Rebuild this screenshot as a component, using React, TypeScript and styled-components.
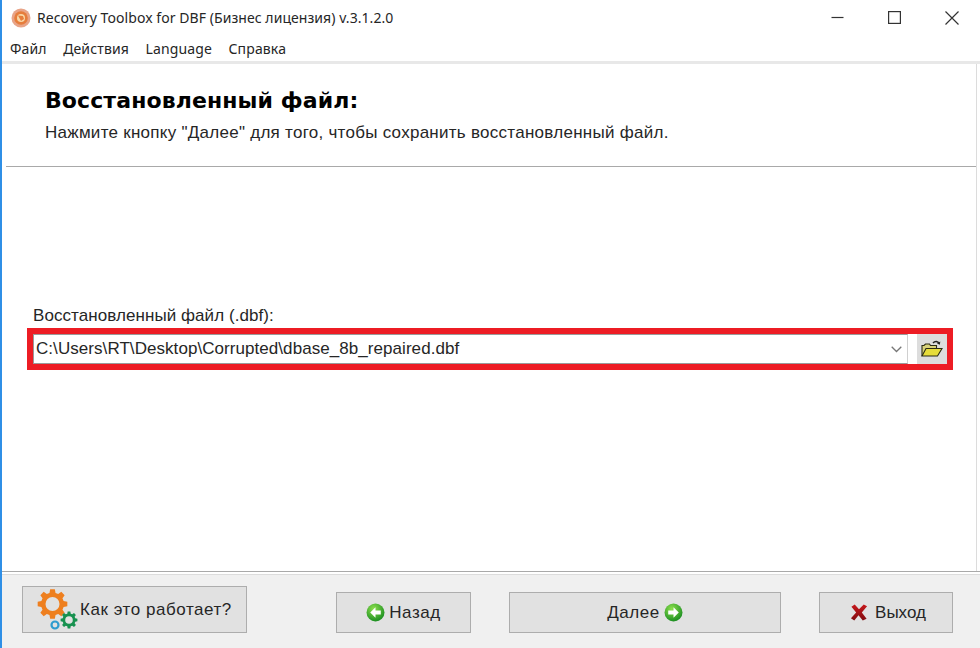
import React from 'react';
import styled, { createGlobalStyle } from 'styled-components';

const GlobalStyle = createGlobalStyle`
  html, body { margin: 0; padding: 0; background: #ffffff; }
  #root { width: 980px; height: 648px; overflow: hidden; }
`;

const colors = {
  frame: '#2f8fe6',
  panel: '#f0f0f0',
  line: '#a9a9a9',
  lineSoft: '#dcdcdc',
  button: '#e1e1e1',
  buttonBorder: '#adadad',
  red: '#ed1c24',
  text: '#262626',
};

const Window = styled.div`
  width: 980px;
  height: 648px;
  box-sizing: border-box;
  display: flex;
  flex-direction: column;
  border-left: 2px solid ${colors.frame};
  background: #ffffff;
  font-family: 'Liberation Sans', Arial, sans-serif;
  color: ${colors.text};
`;

const TitleBar = styled.div`
  height: 38px;
  box-sizing: border-box;
  display: flex;
  align-items: center;
  padding: 0 0 3px 9px;
  flex: none;
`;

const TitleText = styled.span`
  font-family: 'Noto Sans', sans-serif;
  font-size: 14px;
  letter-spacing: 0.06px;
  margin-left: 6px;
  white-space: nowrap;
  flex: 1;
`;

const WindowButtons = styled.div`
  display: flex;
`;

const WindowButton = styled.div`
  width: 57px;
  height: 35px;
  display: flex;
  align-items: center;
  justify-content: center;
`;

const MenuBar = styled.div`
  height: 26px;
  flex: none;
  display: flex;
  align-items: center;
  gap: 16.4px;
  padding: 0 0 3px 8px;
  box-sizing: border-box;
  font-family: 'Noto Sans', sans-serif;
  font-size: 14px;
  letter-spacing: 0.15px;
  border-bottom: 3px solid #e8e8e8;
`;

const Content = styled.div`
  flex: 1;
  display: flex;
  flex-direction: column;
  margin-right: 3px;
  border-right: 1px solid ${colors.lineSoft};
  min-height: 0;
`;

const Header = styled.div`
  height: 103px;
  flex: none;
  box-sizing: border-box;
  margin-left: 4px;
  padding: 25px 0 0 39px;
  border-bottom: 1px solid ${colors.line};
`;

const Heading = styled.h1`
  margin: 0;
  font-family: 'DejaVu Sans', sans-serif;
  font-size: 22px;
  line-height: 24px;
  letter-spacing: 0.1px;
  font-weight: 700;
  color: #000000;
  white-space: nowrap;
`;

const Subheading = styled.p`
  margin: 12px 0 0;
  font-family: 'Liberation Sans', sans-serif;
  font-size: 17px;
  line-height: 16px;
  letter-spacing: 0.27px;
  white-space: nowrap;
`;

const Body = styled.div`
  flex: 1;
  padding: 139px 23px 0 25px;
`;

const FieldLabel = styled.label`
  display: block;
  margin-left: 6px;
  font-size: 17px;
  line-height: 20px;
  letter-spacing: 0.07px;
`;

const Highlight = styled.div`
  margin-top: 2px;
  height: 42px;
  box-sizing: border-box;
  border: 6px solid ${colors.red};
  display: flex;
  align-items: stretch;
  background: #ffffff;
`;

const ComboBox = styled.div`
  flex: 1;
  display: flex;
  align-items: center;
  justify-content: space-between;
  padding: 0 5px 0 2px;
  border: 1px solid #9a9a9a;
  border-right-color: #d0d0d0;
  font-size: 17px;
  letter-spacing: 0.06px;
  white-space: nowrap;
`;

const BrowseButton = styled.div`
  width: 30px;
  margin-left: 9px;
  background: #dddddd;
  display: flex;
  align-items: center;
  justify-content: center;
`;

const Footer = styled.div`
  height: 77px;
  flex: none;
  box-sizing: border-box;
  background: ${colors.panel};
  margin-right: -4px;
  border-top: 1px solid ${colors.line};
  box-shadow: inset 0 2px 0 #ffffff, inset 0 3px 0 ${colors.lineSoft};
  display: flex;
  align-items: flex-start;
  padding: 14px 0 0 20px;
`;

const ActionButton = styled.div<{ $width: number; $left: number; $top?: number; $height?: number; $gap?: number }>`
  width: ${(p) => p.$width}px;
  height: ${(p) => p.$height ?? 41}px;
  margin-left: ${(p) => p.$left}px;
  margin-top: ${(p) => p.$top ?? 6}px;
  box-sizing: border-box;
  flex: none;
  background: ${colors.button};
  border: 1px solid ${colors.buttonBorder};
  display: flex;
  align-items: center;
  justify-content: center;
  gap: ${(p) => p.$gap ?? 4}px;
  font-family: 'Liberation Sans', sans-serif;
  font-size: 17px;
  letter-spacing: 0.55px;
`;

const HelpButton = styled(ActionButton)`
  justify-content: flex-start;
  padding-left: 14px;
`;

const ExitButton = styled(ActionButton)`
  padding-left: 4px;
  letter-spacing: 0;
`;

const AppLogo = () => (
  <svg width="20" height="20" viewBox="0 0 20 20">
    <circle cx="10" cy="10" r="9.500" fill="#e8a488" />
    <circle cx="10" cy="10" r="6.800" fill="#e67d3c" />
    <circle cx="10" cy="10" r="4" fill="#f8d9a8" />
    <path d="M7 7.500l5 .5 1 3-3 2z" fill="#e67d3c" />
  </svg>
);

const Minimize = () => (
  <svg width="13" height="13" viewBox="0 0 13 13">
    <path d="M0.500 6.500h12" stroke="#333" strokeWidth="1.200" />
  </svg>
);

const Maximize = () => (
  <svg width="13" height="13" viewBox="0 0 13 13">
    <rect x="0.600" y="0.600" width="11.800" height="11.800" fill="none" stroke="#333" strokeWidth="1.200" />
  </svg>
);

const Close = () => (
  <svg width="14" height="14" viewBox="0 0 14 14">
    <path d="M0.500 0.500l13 13M13.500 0.500l-13 13" stroke="#333" strokeWidth="1.200" />
  </svg>
);

const Chevron = () => (
  <svg width="11" height="7" viewBox="0 0 11 7">
    <path d="M0.700 0.700l4.800 4.800 4.800-4.800" fill="none" stroke="#777" strokeWidth="1.300" />
  </svg>
);

const FolderOpen = () => (
  <svg width="22" height="20" viewBox="0 0 22 20">
    <path d="M12 4c2-2.400 5-2 6 .4" fill="none" stroke="#222" strokeWidth="1.500" />
    <path d="M19.300 2.600l-.5 3.200-2.800-1.200z" fill="#222" />
    <path d="M1 17V6.500h2L4.500 5h4l1 1.500h6V10" fill="#d8d27a" stroke="#2a2a14" strokeWidth="1.100" />
    <path d="M1 17l4-7.500h16L16.500 17z" fill="#e6dc3a" stroke="#2a2a14" strokeWidth="1.100" />
  </svg>
);

const gearPoints = (cx: number, cy: number, outer: number, inner: number, teeth: number) => {
  const points: string[] = [];
  const step = (Math.PI * 2) / teeth;
  for (let i = 0; i < teeth; i++) {
    const a = i * step - Math.PI / 2;
    const offsets: [number, number][] = [
      [-0.34, inner],
      [-0.2, outer],
      [0.2, outer],
      [0.34, inner],
    ];
    offsets.forEach(([d, r]) => {
      const t = a + d * step;
      points.push(`${(cx + Math.cos(t) * r).toFixed(2)},${(cy + Math.sin(t) * r).toFixed(2)}`);
    });
  }
  return points.join(' ');
};

const Gears = () => (
  <svg width="43" height="44" viewBox="0 0 43 44" style={{ flex: 'none', marginRight: -4 }}>
    <polygon points={gearPoints(15.5, 16, 15, 11.500, 8)} fill="#ee7f1f" />
    <circle cx="15.500" cy="16" r="7" fill={colors.button} />
    <polygon points={gearPoints(32, 32, 8.500, 6.500, 8)} fill="#17914f" />
    <circle cx="32" cy="32" r="3.800" fill={colors.button} />
    <circle cx="18" cy="37" r="3.500" fill="none" stroke="#2f9ccf" strokeWidth="2.200" />
  </svg>
);

const GreenArrow = ({ direction }: { direction: 'left' | 'right' }) => (
  <svg width="19" height="19" viewBox="0 0 18 18" style={{ flex: 'none' }}>
    <defs>
      <radialGradient id={`ball-${direction}`} cx="40%" cy="30%" r="75%">
        <stop offset="0%" stopColor="#8ee04e" />
        <stop offset="100%" stopColor="#14891e" />
      </radialGradient>
    </defs>
    <circle cx="9" cy="9" r="8.500" fill={`url(#ball-${direction})`} />
    <path
      d={direction === 'left' ? 'M9 4L4 9l5 5v-3h5V7H9z' : 'M9 4l5 5-5 5v-3H4V7h5z'}
      fill="#ffffff"
    />
  </svg>
);

const RedCross = () => (
  <svg width="18" height="19" viewBox="0 0 19 19" style={{ flex: 'none' }}>
    <defs>
      <linearGradient id="cross-fill" x1="0" y1="0" x2="0" y2="1">
        <stop offset="0%" stopColor="#c8181c" />
        <stop offset="100%" stopColor="#7f0c10" />
      </linearGradient>
    </defs>
    <path
      d="M1.500 3.500L5 1l4.500 5L14.500 1 18 3l-5.500 6.500L17.500 16 13.500 18 9 12.500 4.500 18 1 15.500 6.500 9.500z"
      fill="url(#cross-fill)"
    />
  </svg>
);

export default function App() {
  return (
    <>
      <GlobalStyle />
      <Window>
        <TitleBar>
          <AppLogo />
          <TitleText>Recovery Toolbox for DBF (Бизнес лицензия) v.3.1.2.0</TitleText>
          <WindowButtons>
            <WindowButton><Minimize /></WindowButton>
            <WindowButton><Maximize /></WindowButton>
            <WindowButton><Close /></WindowButton>
          </WindowButtons>
        </TitleBar>
        <MenuBar>
          <span>Файл</span>
          <span>Действия</span>
          <span>Language</span>
          <span>Справка</span>
        </MenuBar>
        <Content>
          <Header>
            <Heading>Восстановленный файл:</Heading>
            <Subheading>Нажмите кнопку "Далее" для того, чтобы сохранить восстановленный файл.</Subheading>
          </Header>
          <Body>
            <FieldLabel>Восстановленный файл (.dbf):</FieldLabel>
            <Highlight>
              <ComboBox>
                <span>C:\Users\RT\Desktop\Corrupted\dbase_8b_repaired.dbf</span>
                <Chevron />
              </ComboBox>
              <BrowseButton><FolderOpen /></BrowseButton>
            </Highlight>
          </Body>
        </Content>
        <Footer>
          <HelpButton $width={225} $left={0} $top={0} $height={47}>
            <Gears />
            <span>Как это работает?</span>
          </HelpButton>
          <ActionButton $width={135} $left={89}>
            <GreenArrow direction="left" />
            <span>Назад</span>
          </ActionButton>
          <ActionButton $width={272} $left={38}>
            <span>Далее</span>
            <GreenArrow direction="right" />
          </ActionButton>
          <ExitButton $width={134} $left={38} $gap={7}>
            <RedCross />
            <span>Выход</span>
          </ExitButton>
        </Footer>
      </Window>
    </>
  );
}
